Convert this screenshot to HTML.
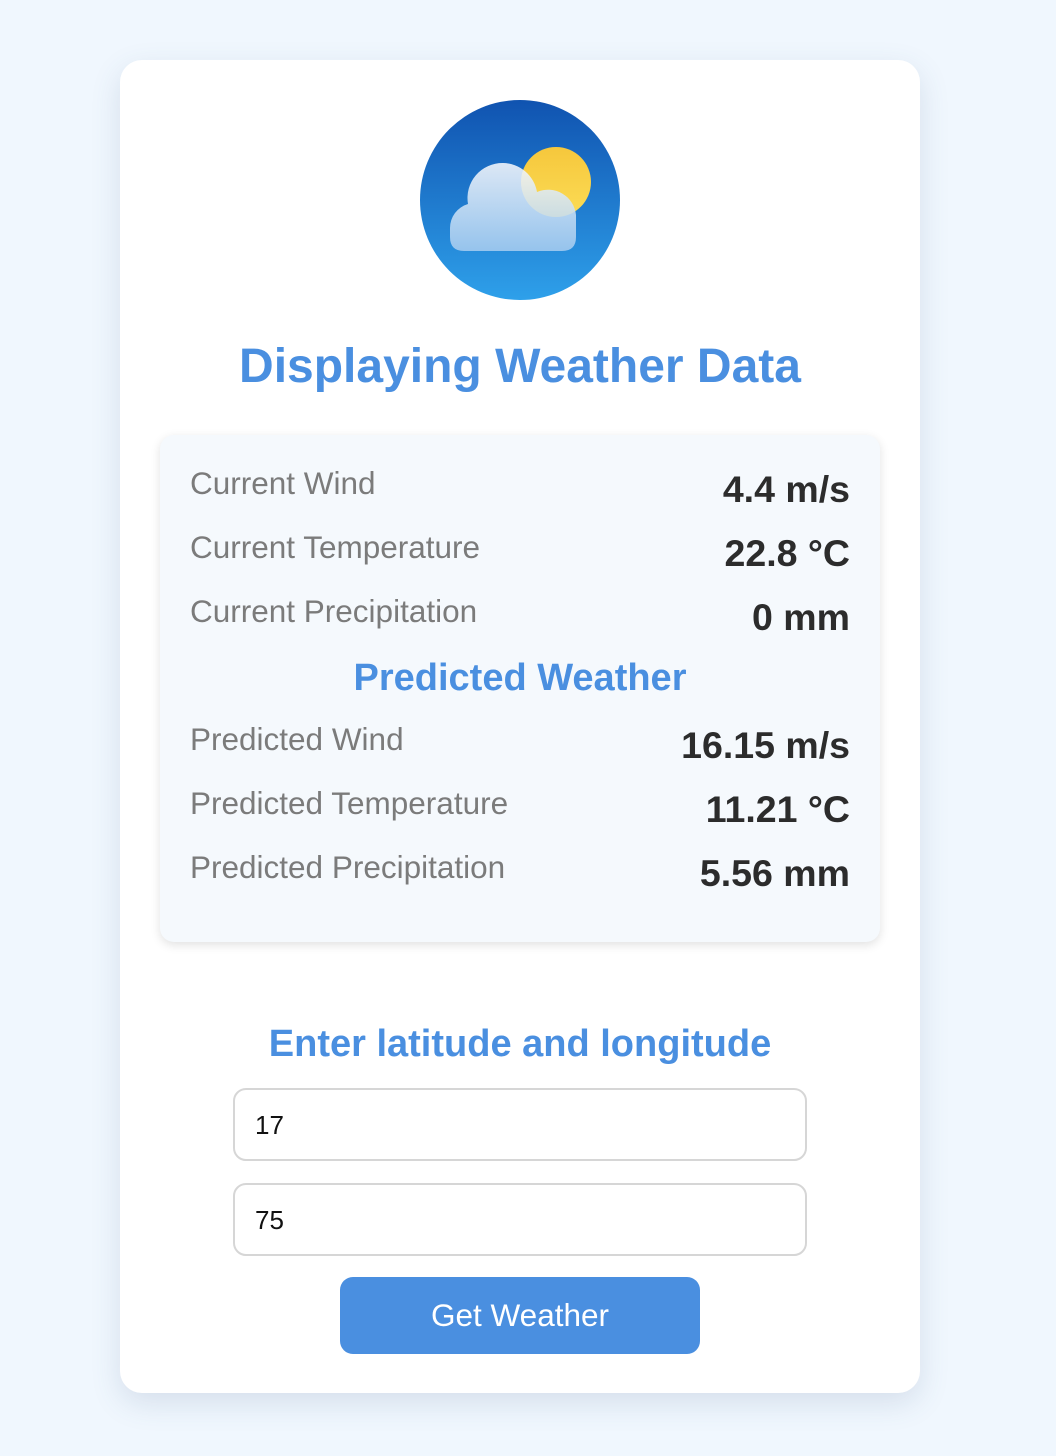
<!DOCTYPE html>
<html><head><meta charset="utf-8"><style>
*{box-sizing:border-box;margin:0;padding:0}
body{width:1056px;height:1456px;background:#f0f7fe;font-family:"Liberation Sans",Arial,sans-serif;position:relative;overflow:hidden}
.card{position:absolute;left:120px;top:60px;width:800px;height:1333px;background:#fff;border-radius:22px;box-shadow:0 10px 30px rgba(60,90,130,0.15)}
.icon{position:absolute;left:300px;top:40px;width:200px;height:200px}
h1{position:absolute;left:0;width:800px;top:279px;text-align:center;font-size:48px;font-weight:bold;color:#4a8fe0}
.box{position:absolute;left:40px;top:375px;width:720px;height:507px;background:#f5f9fd;border-radius:14px;box-shadow:0 3px 10px rgba(0,0,0,0.12)}
.row{position:absolute;left:30px;right:30px;height:40px}
.lab{position:absolute;left:0;top:-2px;font-size:31.5px;color:#7b7b7b}
.val{position:absolute;right:0;top:1px;font-size:37.5px;font-weight:bold;color:#2c2c2c}
h2{position:absolute;left:0;width:100%;text-align:center;font-size:38px;font-weight:bold;color:#4a8fe0}
.inp{position:absolute;left:113px;width:574px;height:73px;border:2px solid #d6d6d6;border-radius:13px;font-size:26px;padding:20px 0 0 20px;color:#111}
.btn{position:absolute;left:220px;top:1217px;width:360px;height:77px;background:#4a8fe0;border-radius:13px;color:#fff;font-size:31.5px;text-align:center;line-height:77px}
</style></head><body>
<div class="card">
<svg class="icon" viewBox="0 0 200 200">
<defs>
<linearGradient id="bg" x1="0" y1="0" x2="0" y2="1"><stop offset="0" stop-color="#1053b0"/><stop offset="1" stop-color="#2ea0ea"/></linearGradient>
<linearGradient id="sun" x1="0" y1="0" x2="0" y2="1"><stop offset="0" stop-color="#f6c73c"/><stop offset="1" stop-color="#fbdc55"/></linearGradient>
<linearGradient id="cl" x1="0" y1="63" x2="0" y2="151" gradientUnits="userSpaceOnUse"><stop offset="0" stop-color="#f6f8fc"/><stop offset="1" stop-color="#a5cbef"/></linearGradient>
</defs>
<circle cx="100" cy="100" r="100" fill="url(#bg)"/>
<circle cx="136" cy="82" r="35" fill="url(#sun)"/>
<g fill="url(#cl)" opacity="0.88">
<path d="M83 63 A35 35 0 0 1 117 92 A28 28 0 0 1 156 115 L156 137 Q156 151 142 151 L44 151 Q30 151 30 137 L30 128 A25 25 0 0 1 48 104 A35 35 0 0 1 83 63 Z"/>
</g>
</svg>
<h1>Displaying Weather Data</h1>
<div class="box">
<div class="row" style="top:32px"><span class="lab">Current Wind</span><span class="val">4.4 m/s</span></div>
<div class="row" style="top:96px"><span class="lab">Current Temperature</span><span class="val">22.8 °C</span></div>
<div class="row" style="top:160px"><span class="lab">Current Precipitation</span><span class="val">0 mm</span></div>
<h2 style="top:222px">Predicted Weather</h2>
<div class="row" style="top:288px"><span class="lab">Predicted Wind</span><span class="val">16.15 m/s</span></div>
<div class="row" style="top:352px"><span class="lab">Predicted Temperature</span><span class="val">11.21 °C</span></div>
<div class="row" style="top:416px"><span class="lab">Predicted Precipitation</span><span class="val">5.56 mm</span></div>
</div>
<h2 style="top:963px">Enter latitude and longitude</h2>
<div class="inp" style="top:1028px">17</div>
<div class="inp" style="top:1123px">75</div>
<div class="btn">Get Weather</div>
</div>
</body></html>
